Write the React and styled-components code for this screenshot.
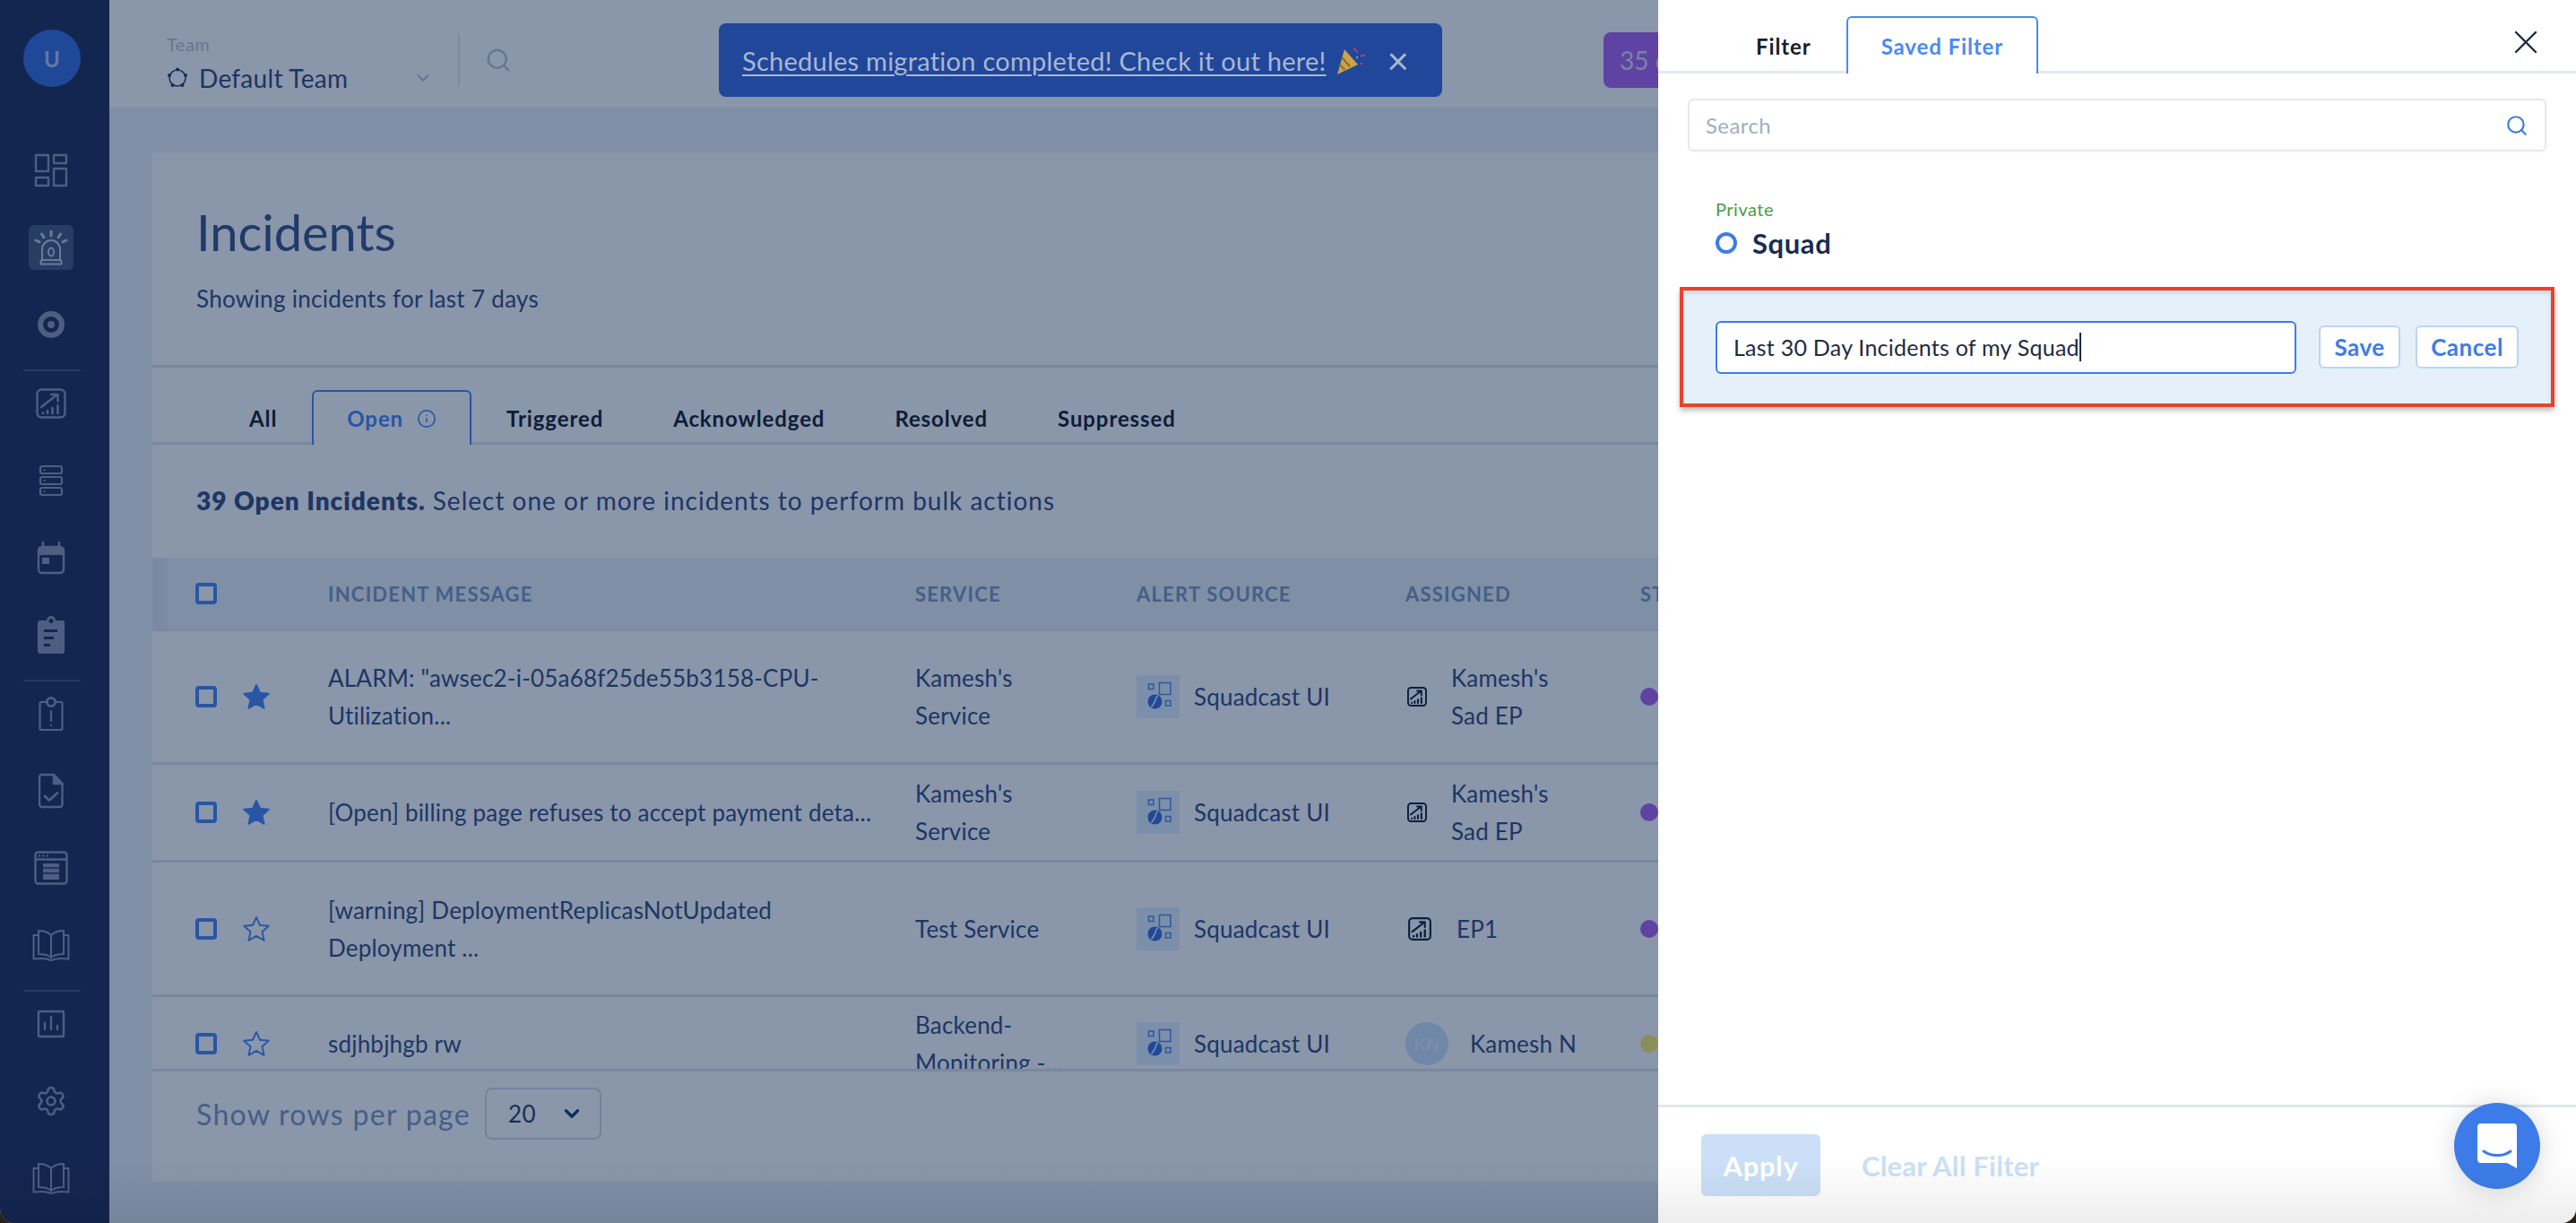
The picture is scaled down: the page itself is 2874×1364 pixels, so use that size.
import React from 'react';
import styled, { createGlobalStyle } from 'styled-components';
import { Settings, Search as SearchGlyph, ChevronDown, Info } from 'lucide-react';

const FONT = `"Lato", "Noto Sans", "Liberation Sans", sans-serif`;
const UI_BLUE = '#4a8af5';
const INK = '#384f7d';
const MUTED = '#8299be';
const RULE = '#dfe5eb';
const PURPLE = '#b067f2';

const Global = createGlobalStyle`
  html, body { margin: 0; padding: 0; background: #2a2018; }
  body { font-family: ${FONT}; }
  * { box-sizing: border-box; }
`;

const Screen = styled.div`
  position: relative;
  display: flex;
  width: 2874px;
  height: 1364px;
  overflow: hidden;
  border-radius: 0 0 16px 16px;
  background: #ebf2f8;
  color: ${INK};
`;

/* ---------- sidebar ---------- */
const Sidebar = styled.aside`
  flex: 0 0 122px;
  display: flex;
  flex-direction: column;
  align-items: center;
  padding-right: 8px;
  background: #233157;
  color: #8c9ab8;
`;
const Avatar = styled.div`
  width: 64px;
  height: 64px;
  margin: 33px 0 68px 2px;
  border-radius: 50%;
  background: #3b6fe0;
  color: #b9c9ee;
  font-size: 24px;
  font-weight: 700;
  display: flex;
  align-items: center;
  justify-content: center;
`;
const NavGroup = styled.div`
  display: flex;
  flex-direction: column;
  gap: 36px;
`;
const NavItem = styled.div`
  width: 50px;
  height: 50px;
  border-radius: 6px;
  display: flex;
  align-items: center;
  justify-content: center;
  background: ${p => (p.$active ? '#4b5b7e' : 'transparent')};
  color: ${p => (p.$active ? '#c3cde0' : 'inherit')};
`;
const NavRule = styled.div`
  width: 64px;
  height: 2px;
  margin: 25px 0 11px 2px;
  background: #46557b;
`;

const S = { fill: 'none', stroke: 'currentColor', strokeWidth: 2.4, strokeLinejoin: 'round', strokeLinecap: 'round' };

const DashIcon = () => (
  <svg width="38" height="38" viewBox="0 0 38 38" {...S}>
    <rect x="2" y="2" width="14" height="18" /><rect x="22" y="2" width="14" height="9" />
    <rect x="2" y="27" width="14" height="9" /><rect x="22" y="17" width="14" height="19" />
  </svg>
);
const SirenIcon = () => (
  <svg width="38" height="40" viewBox="0 0 38 40" {...S} strokeWidth="2">
    <path d="M9 34V22a10 10 0 0 1 20 0v12" />
    <path d="M7.5 38.5h23v-2.2a2.3 2.3 0 0 0-2.3-2.3H9.8a2.3 2.3 0 0 0-2.3 2.3z" />
    <ellipse cx="19" cy="25" rx="3" ry="4.6" />
    <path strokeWidth="3" d="M19 2v5M8.5 5l2.4 3.6M29.5 5l-2.4 3.6M2 12l4 1.8M36 12l-4 1.8" />
  </svg>
);
const TargetIcon = () => (
  <svg width="32" height="32" viewBox="0 0 32 32" fill="currentColor">
    <path fillRule="evenodd" d="M16 1a15 15 0 1 0 0 30 15 15 0 0 0 0-30zm0 6a9 9 0 1 1 0 18 9 9 0 0 1 0-18z" />
    <circle cx="16" cy="16" r="4" />
  </svg>
);
const EpIcon = ({ size = 34, width = 2.4 }) => (
  <svg width={size} height={size} viewBox="0 0 34 34" {...S} strokeWidth={width}>
    <rect x="1.5" y="1.5" width="31" height="31" rx="5" />
    <path d="M6 21L24 7M17 7h7.5v7.5" />
    <path strokeWidth={width * 1.1} d="M8 28v-.5M13 28v-3M18.5 28v-6M24.5 28v-9" />
  </svg>
);
const ServersIcon = () => (
  <svg width="28" height="36" viewBox="0 0 28 36" {...S} strokeWidth="2.2">
    <rect x="2" y="2" width="24" height="8" rx="2" /><rect x="2" y="14" width="24" height="8" rx="2" />
    <rect x="2" y="26" width="24" height="8" rx="2" />
    <path d="M6.5 6h.01M6.5 18h.01M6.5 30h.01" />
  </svg>
);
const CalendarIcon = () => (
  <svg width="32" height="38" viewBox="0 0 32 38" fill="none">
    <rect x="2" y="7" width="28" height="29" rx="4" stroke="currentColor" strokeWidth="2.4" />
    <path d="M2 11a4 4 0 0 1 4-4h20a4 4 0 0 1 4 4v5H2z" fill="currentColor" />
    <path d="M7 1v7M25 1v7" stroke="currentColor" strokeWidth="2.4" />
    <rect x="6" y="19" width="8" height="7" fill="currentColor" />
  </svg>
);
const ClipFilledIcon = () => (
  <svg width="30" height="42" viewBox="0 0 30 42" fill="none">
    <path fillRule="evenodd" fill="currentColor" d="M10 5a5 5 0 0 1 10 0h7a3 3 0 0 1 3 3v31a3 3 0 0 1-3 3H3a3 3 0 0 1-3-3V8a3 3 0 0 1 3-3zM15 3a2.5 2.5 0 1 0 0 5 2.5 2.5 0 0 0 0-5zM7 15v3h15v-3zM7 23v3h11v-3zM7 31v3h7v-3z" />
  </svg>
);
const ClipAlertIcon = () => (
  <svg width="28" height="40" viewBox="0 0 28 40" {...S} strokeWidth="2.2">
    <path d="M9 7H3a1.5 1.5 0 0 0-1.5 1.5v28A1.5 1.5 0 0 0 3 38h22a1.5 1.5 0 0 0 1.5-1.5v-28A1.5 1.5 0 0 0 25 7h-6" />
    <circle cx="14" cy="7" r="4.6" strokeWidth="2.8" />
    <path d="M14 17v11M14 33v.01" />
  </svg>
);
const DocCheckIcon = () => (
  <svg width="28" height="40" viewBox="0 0 28 40" {...S}>
    <path d="M4 2h13l9.5 10v23a3 3 0 0 1-3 3H4a3 3 0 0 1-3-3V5a3 3 0 0 1 3-3z" />
    <path d="M17 2v10h9.5z" fill="currentColor" />
    <path strokeWidth="3" d="M7 26l5 4.5 9-8" />
  </svg>
);
const WindowIcon = () => (
  <svg width="38" height="38" viewBox="0 0 38 38" fill="none">
    <rect x="1.5" y="1.5" width="35" height="35" rx="3" stroke="currentColor" strokeWidth="2.4" />
    <path d="M1.5 9.5h35" stroke="currentColor" strokeWidth="2.4" />
    <path d="M6 5.5h.01M10.5 5.5h.01M15 5.5h.01" stroke="currentColor" strokeWidth="2.4" strokeLinecap="round" />
    <rect x="10" y="14" width="18" height="18" fill="currentColor" />
    <path d="M10 19h18M10 25h18" stroke="#233157" strokeWidth="1.5" />
  </svg>
);
const BookIcon = () => (
  <svg width="42" height="36" viewBox="0 0 42 36" {...S} strokeWidth="2">
    <path d="M21 32V7c-3-3-8-5-14-5v26c6 0 11 1 14 4zM21 32V7c3-3 8-5 14-5v26c-6 0-11 1-14 4z" />
    <path d="M7 7H1.5v26.5c7-1 14-1 19.5 1.5 5.5-2.5 12.5-2.5 19.5-1.5V7H35" />
  </svg>
);
const BarsIcon = () => (
  <svg width="32" height="32" viewBox="0 0 32 32" {...S}>
    <rect x="2" y="2" width="28" height="28" rx="1" />
    <path d="M9 22v-7M16 22V8M23 22v-4" />
  </svg>
);

const navGroups = [
  { items: [<DashIcon />, <SirenIcon />, <TargetIcon />], active: 1 },
  { items: [<EpIcon />, <ServersIcon />, <CalendarIcon />, <ClipFilledIcon />] },
  { items: [<ClipAlertIcon />, <DocCheckIcon />, <WindowIcon />, <BookIcon />] },
  { items: [<BarsIcon />, <Settings size={36} strokeWidth={1.7} />, <BookIcon />] },
];

/* ---------- top bar ---------- */
const Column = styled.div`
  flex: 1;
  min-width: 0;
  display: flex;
  flex-direction: column;
`;
const TopBar = styled.header`
  flex: 0 0 120px;
  display: flex;
  align-items: center;
  padding: 14px 0 0 64px;
  background: #fff;
  white-space: nowrap;
`;
const TeamBlock = styled.div`
  flex: 0 0 325px;
  display: flex;
  flex-direction: column;
  gap: 9px;
  padding: 6px 28px 0 0;
`;
const TeamLabel = styled.span`
  font-size: 20px;
  line-height: 24px;
  letter-spacing: .5px;
  color: #bcc5d2;
`;
const TeamValue = styled.div`
  display: flex;
  align-items: center;
  gap: 12px;
  font-size: 28px;
  line-height: 34px;
  letter-spacing: .3px;
  color: #394c78;
  & > svg:last-child { margin-left: auto; color: #b7c2d1; }
`;
const VRule = styled.div`
  width: 2px;
  height: 58px;
  background: #e2e8ee;
`;
const TopSearch = styled.div`
  margin-left: 28px;
  width: 30px;
  display: flex;
  color: #b7c2d1;
`;
const Banner = styled.div`
  position: relative;
  z-index: 11;
  margin-left: 231px;
  flex: 0 0 807px;
  height: 82px;
  display: flex;
  align-items: center;
  padding-left: 26px;
  border-radius: 8px;
  background: #20479a;
  color: #a9b7d4;
  font-size: 29px;
  letter-spacing: .25px;
  & > a { color: inherit; text-decoration: underline; text-underline-offset: 4px; text-decoration-thickness: 1.5px; }
  & > svg:first-of-type { margin-left: 10px; }
`;
const BannerClose = styled.span`
  margin-left: 24px;
  font-size: 42px;
  line-height: 1;
`;
const TrialBadge = styled.div`
  margin-left: 180px;
  flex: 0 0 200px;
  height: 62px;
  display: flex;
  align-items: center;
  padding-left: 18px;
  border-radius: 8px;
  background: ${PURPLE};
  color: #e3dcf2;
  font-size: 28px;
`;

/* ---------- incidents card ---------- */
const Main = styled.main`
  flex: 1;
  padding: 50px 48px 46px;
  display: flex;
`;
const Card = styled.section`
  flex: 1;
  display: flex;
  flex-direction: column;
  background: #fff;
`;
const CardHead = styled.div`
  flex: 0 0 240px;
  padding: 51px 49px 0;
  border-bottom: 3px solid ${RULE};
`;
const Title = styled.h1`
  margin: 0;
  font-size: 56px;
  line-height: 76px;
  font-weight: 400;
  color: #3b558a;
`;
const Subtitle = styled.p`
  margin: 18px 0 0;
  font-size: 26px;
  line-height: 36px;
  letter-spacing: .3px;
  color: ${INK};
`;
const TabRow = styled.div`
  flex: 0 0 ${p => p.$h}px;
  display: flex;
  align-items: flex-end;
  padding-left: ${p => p.$pad}px;
  border-bottom: 3px solid ${p => p.$rule};
`;
const Tab = styled.div`
  height: ${p => p.$h}px;
  margin-bottom: -3px;
  padding: 0 37px;
  display: flex;
  align-items: center;
  gap: 15px;
  font-size: 24px;
  font-weight: 700;
  letter-spacing: .9px;
  color: ${p => (p.$active ? UI_BLUE : '#1a1f2b')};
  background: ${p => (p.$active ? '#fff' : 'transparent')};
  border: 2px solid ${p => (p.$active ? UI_BLUE : 'transparent')};
  border-bottom: 0;
  border-radius: 6px 6px 0 0;
`;
const InfoLine = styled.div`
  flex: 0 0 126px;
  padding: 44px 49px 0;
  font-size: 28px;
  line-height: 36px;
  letter-spacing: 1px;
  color: ${INK};
  white-space: nowrap;
  & > b { font-weight: 800; }
`;
const gridCols = '148px 655px 247px 300px 262px 1fr';
const THead = styled.div`
  flex: 0 0 82px;
  display: grid;
  grid-template-columns: ${gridCols};
  align-items: center;
  padding-left: 48px;
  background: linear-gradient(90deg, #e2e9f1 0, #e2e9f1 14px, #ebf2f8 18px);
  border-bottom: 2px solid ${RULE};
  font-size: 22px;
  font-weight: 700;
  letter-spacing: 1.2px;
  color: ${MUTED};
  white-space: nowrap;
`;
const TBody = styled.div`
  flex: 0 0 491px;
  overflow: hidden;
  border-bottom: 3px solid ${RULE};
`;
const Row = styled.div`
  height: ${p => p.$h}px;
  display: grid;
  grid-template-columns: ${gridCols};
  align-items: center;
  padding-left: 48px;
  border-bottom: 3px solid ${RULE};
  font-size: 26px;
  line-height: 42px;
  letter-spacing: .2px;
  white-space: nowrap;
`;
const CheckCell = styled.div`
  display: flex;
  align-items: center;
  gap: 29px;
`;
const Check = styled.span`
  width: 24px;
  height: 24px;
  border: 4px solid ${UI_BLUE};
  border-radius: 4px;
  background: #fff;
`;
const Lines = styled.div`
  & > span { display: block; }
`;
const Cell = styled.div`
  display: flex;
  align-items: center;
  gap: ${p => p.$gap}px;
  margin-left: ${p => p.$ml || 0}px;
`;
const SourceBox = styled.div`
  width: 48px;
  height: 48px;
  background: #e5f3ff;
`;
const Dot = styled.span`
  display: block;
  width: 20px;
  height: 20px;
  border-radius: 50%;
  background: ${p => p.$c};
`;
const UserChip = styled.div`
  width: 48px;
  height: 48px;
  border-radius: 50%;
  background: #cfe6fb;
  color: #eaf3fd;
  font-size: 20px;
  display: flex;
  align-items: center;
  justify-content: center;
`;
const EpInk = styled.span`
  display: flex;
  color: #1a2238;
`;
const CardFoot = styled.div`
  flex: 1;
  display: flex;
  align-items: center;
  gap: 16px;
  padding: 0 49px 29px;
  font-size: 32px;
  letter-spacing: 1.3px;
  color: ${MUTED};
  white-space: nowrap;
`;
const RowsSelect = styled.div`
  width: 130px;
  height: 58px;
  padding: 0 18px 0 24px;
  display: flex;
  align-items: center;
  justify-content: space-between;
  border: 2px solid #d5dde6;
  border-radius: 8px;
  font-size: 26px;
  letter-spacing: .5px;
  color: #2f3f5f;
  & > svg { color: #1f3a75; }
`;

/* ---------- drawer ---------- */
const Scrim = styled.div`
  position: absolute;
  inset: 0;
  z-index: 10;
  background: rgba(0, 27, 70, .46);
`;
const Drawer = styled.aside`
  position: absolute;
  top: 0;
  right: 0;
  bottom: 0;
  z-index: 20;
  width: 1024px;
  display: flex;
  flex-direction: column;
  background: #fff;
  color: #1f2f4f;
`;
const DrawerTabs = styled(TabRow)`
  padding-right: 43px;
  align-items: flex-start;
  & > div { margin-top: 18px; }
  & > svg { margin: 34px 0 0 auto; color: #1b2a44; }
`;
const DrawerSearch = styled.div`
  margin: 28px 33px 0;
  height: 59px;
  padding: 0 18px;
  display: flex;
  align-items: center;
  justify-content: space-between;
  border: 2px solid #e4e8ee;
  border-radius: 6px;
  font-size: 24px;
  letter-spacing: .4px;
  color: #a0aec0;
  & > svg { color: #3d7ce8; }
`;
const PrivateLabel = styled.div`
  margin: 52px 0 0 64px;
  font-size: 20px;
  line-height: 24px;
  letter-spacing: .5px;
  color: #4a9d3f;
`;
const SquadRow = styled.div`
  margin: 8px 0 0 64px;
  height: 36px;
  display: flex;
  align-items: center;
  gap: 17px;
  font-size: 31px;
  font-weight: 700;
  letter-spacing: .6px;
  color: #1a2c50;
`;
const Radio = styled.span`
  width: 24px;
  height: 24px;
  border: 4px solid #3d7ce8;
  border-radius: 50%;
`;
const EditBox = styled.div`
  margin: 31px 0 0 24px;
  width: 976px;
  height: 134px;
  padding-left: 36px;
  display: flex;
  align-items: center;
  background: #e6f0fb;
  border: 4px solid #e8432a;
  box-shadow: 0 4px 6px rgba(0, 0, 0, .25), inset 0 3px 4px rgba(0, 0, 0, .12);
`;
const NameInput = styled.div`
  width: 648px;
  height: 59px;
  padding-left: 18px;
  display: flex;
  align-items: center;
  background: #fff;
  border: 2px solid #3d7ce8;
  border-radius: 6px;
  font-size: 25px;
  letter-spacing: .25px;
  color: #1e2c3f;
  white-space: nowrap;
  &::after { content: ''; width: 2px; height: 32px; background: #1e2c3f; }
`;
const GhostButton = styled.div`
  width: ${p => p.$w}px;
  height: 48px;
  margin-left: ${p => p.$ml}px;
  display: flex;
  align-items: center;
  justify-content: center;
  background: #fff;
  border: 2px solid #bcd3f5;
  border-radius: 6px;
  color: #3d7ce8;
  font-size: 26px;
  font-weight: 700;
  letter-spacing: .5px;
`;
const DrawerFoot = styled.div`
  margin-top: auto;
  flex: 0 0 132px;
  padding: 30px 0 0 48px;
  display: flex;
  align-items: flex-start;
  border-top: 3px solid #e1e7ec;
`;
const ApplyButton = styled.div`
  width: 133px;
  height: 69px;
  display: flex;
  align-items: center;
  justify-content: center;
  border-radius: 6px;
  background: #cbdff8;
  color: #fff;
  font-size: 31px;
  font-weight: 700;
  letter-spacing: .6px;
`;
const ClearLink = styled.div`
  margin-left: 46px;
  height: 69px;
  display: flex;
  align-items: center;
  color: #cbdff8;
  font-size: 31px;
  font-weight: 700;
  letter-spacing: .2px;
  white-space: nowrap;
`;
const ChatBubble = styled.div`
  position: absolute;
  right: 40px;
  bottom: 38px;
  width: 96px;
  height: 96px;
  display: flex;
  align-items: center;
  justify-content: center;
  border-radius: 50%;
  background: #3d7ce8;
  box-shadow: 0 2px 30px rgba(0, 0, 0, .16);
`;
const WindowShade = styled.div`
  position: absolute;
  left: 0;
  right: 0;
  bottom: 0;
  z-index: 30;
  height: 70px;
  pointer-events: none;
  background: linear-gradient(180deg, rgba(0, 0, 0, 0), rgba(0, 0, 0, .07));
`;

/* ---------- small drawings ---------- */
const Star = ({ filled }) => (
  <svg width="30" height="30" viewBox="0 0 24 24" fill={filled ? UI_BLUE : 'none'} stroke={UI_BLUE} strokeWidth="1.5" strokeLinejoin="round">
    <polygon points="12,1.5 15.2,8.6 23,9.4 17.2,14.6 18.9,22.3 12,18.3 5.1,22.3 6.8,14.6 1,9.4 8.8,8.6" />
  </svg>
);
const SourceIcon = () => (
  <SourceBox>
    <svg width="48" height="48" viewBox="0 0 48 48" fill="none">
      <rect x="13.5" y="10" width="5.5" height="5.5" stroke="#5d8fe6" strokeWidth="1.6" />
      <rect x="25.5" y="8.5" width="12.5" height="13" stroke="#5d8fe6" strokeWidth="1.6" />
      <rect x="32.5" y="28.5" width="5.5" height="5.5" stroke="#5d8fe6" strokeWidth="1.6" />
      <circle cx="20.5" cy="29.5" r="8" fill="#3f6fe0" />
      <path d="M24 23c-3 1-2 4-3.5 6.5S18 34 16.5 35.5" stroke="#e5f3ff" strokeWidth="1.6" />
    </svg>
  </SourceBox>
);
const TeamDots = () => (
  <svg width="24" height="24" viewBox="0 0 24 24" fill="none" stroke="#2b3f6f" strokeWidth="1.5">
    <circle cx="12" cy="12" r="9" />
    <g fill="#2b3f6f" stroke="none">
      <circle cx="12" cy="2.5" r="2" /><circle cx="21" cy="9" r="2" /><circle cx="17.5" cy="20" r="2" />
      <circle cx="6.5" cy="20" r="2" /><circle cx="3" cy="9" r="2" />
    </g>
  </svg>
);
const Popper = () => (
  <svg width="34" height="34" viewBox="0 0 34 34">
    <path d="M10 5l15 17L2 33z" fill="#c9a24a" />
    <path d="M7 14l9 10M4.5 22l6 6" stroke="#8d6a2c" strokeWidth="2" />
    <path d="M20 4c3 0 2 4 5 4M28 13c2-2 3 0 5-2" stroke="#d8435b" strokeWidth="1.6" fill="none" />
    <circle cx="29" cy="21" r="1.2" fill="#d8435b" /><circle cx="24" cy="14" r="1.2" fill="#5fa4d8" />
  </svg>
);
const CloseX = () => (
  <svg width="26" height="26" viewBox="0 0 26 26" stroke="currentColor" strokeWidth="2.4" strokeLinecap="round">
    <path d="M2 2l22 22M24 2L2 24" />
  </svg>
);
const IntercomMark = () => (
  <svg width="44" height="50" viewBox="0 0 44 50">
    <path d="M4 0h36a4 4 0 0 1 4 4v46l-11-6H4a4 4 0 0 1-4-4V4a4 4 0 0 1 4-4z" fill="#fff" />
    <path d="M7 31c8 6 22 6 30 0" fill="none" stroke="#3d7ce8" strokeWidth="3" strokeLinecap="round" />
  </svg>
);

const rows = [
  { h: 149, star: true, msg: ['ALARM: "awsec2-i-05a68f25de55b3158-CPU-', 'Utilization...'], svc: ["Kamesh's", 'Service'], who: ["Kamesh's", 'Sad EP'], kind: 'small', dot: PURPLE },
  { h: 109, star: true, msg: ['[Open] billing page refuses to accept payment deta...'], svc: ["Kamesh's", 'Service'], who: ["Kamesh's", 'Sad EP'], kind: 'small', dot: PURPLE },
  { h: 150, star: false, msg: ['[warning] DeploymentReplicasNotUpdated', 'Deployment ...'], svc: ['Test Service'], who: ['EP1'], kind: 'large', dot: PURPLE },
  { h: 106, star: false, msg: ['sdjhbjhgb rw'], svc: ['Backend-', 'Monitoring -...'], who: ['Kamesh N'], kind: 'user', dot: '#fff06e' },
];

const TextLines = ({ lines }) => (
  <Lines>{lines.map(l => <span key={l}>{l}</span>)}</Lines>
);

const assignee = {
  small: { gap: 27, ml: 2, icon: <EpInk><EpIcon size={22} width={3} /></EpInk> },
  large: { gap: 28, ml: 3, icon: <EpInk><EpIcon size={26} width={2.8} /></EpInk> },
  user: { gap: 24, ml: 0, icon: <UserChip>KN</UserChip> },
};

export default function App() {
  return (
    <Screen>
      <Global />
      <Sidebar>
        <Avatar>U</Avatar>
        {navGroups.map((g, i) => (
          <React.Fragment key={i}>
            {i > 0 && <NavRule />}
            <NavGroup>
              {g.items.map((icon, j) => (
                <NavItem key={j} $active={g.active === j}>{icon}</NavItem>
              ))}
            </NavGroup>
          </React.Fragment>
        ))}
      </Sidebar>
      <Column>
        <TopBar>
          <TeamBlock>
            <TeamLabel>Team</TeamLabel>
            <TeamValue><TeamDots />Default Team<ChevronDown size={22} /></TeamValue>
          </TeamBlock>
          <VRule />
          <TopSearch><SearchGlyph size={30} strokeWidth={1.8} /></TopSearch>
          <Banner>
            <a>Schedules migration completed! Check it out here!</a>
            <Popper />
            <BannerClose>×</BannerClose>
          </Banner>
          <TrialBadge>35 days left</TrialBadge>
        </TopBar>
        <Main>
          <Card>
            <CardHead>
              <Title>Incidents</Title>
              <Subtitle>Showing incidents for last 7 days</Subtitle>
            </CardHead>
            <TabRow $h={86} $pad={69} $rule={RULE}>
              {['All', 'Open', 'Triggered', 'Acknowledged', 'Resolved', 'Suppressed'].map(t => (
                <Tab key={t} $h={61} $active={t === 'Open'}>
                  {t}{t === 'Open' && <Info size={22} strokeWidth={1.8} />}
                </Tab>
              ))}
            </TabRow>
            <InfoLine><b>39 Open Incidents.</b> Select one or more incidents to perform bulk actions</InfoLine>
            <THead>
              <CheckCell><Check /></CheckCell>
              <span>INCIDENT MESSAGE</span>
              <span>SERVICE</span>
              <span>ALERT SOURCE</span>
              <span>ASSIGNED</span>
              <span>STATUS</span>
            </THead>
            <TBody>
              {rows.map(r => {
                const a = assignee[r.kind];
                return (
                  <Row key={r.msg[0]} $h={r.h}>
                    <CheckCell><Check /><Star filled={r.star} /></CheckCell>
                    <TextLines lines={r.msg} />
                    <TextLines lines={r.svc} />
                    <Cell $gap={16}><SourceIcon />Squadcast UI</Cell>
                    <Cell $gap={a.gap} $ml={a.ml}>{a.icon}<TextLines lines={r.who} /></Cell>
                    <Dot $c={r.dot} />
                  </Row>
                );
              })}
            </TBody>
            <CardFoot>
              Show rows per page
              <RowsSelect>20<ChevronDown size={26} strokeWidth={3} /></RowsSelect>
            </CardFoot>
          </Card>
        </Main>
      </Column>
      <Scrim />
      <Drawer>
        <DrawerTabs $h={82} $pad={70} $rule="#e4e8ee">
          <Tab $h={64}>Filter</Tab>
          <Tab $h={64} $active>Saved Filter</Tab>
          <CloseX />
        </DrawerTabs>
        <DrawerSearch>Search<SearchGlyph size={26} strokeWidth={2} /></DrawerSearch>
        <PrivateLabel>Private</PrivateLabel>
        <SquadRow><Radio />Squad</SquadRow>
        <EditBox>
          <NameInput>Last 30 Day Incidents of my Squad</NameInput>
          <GhostButton $w={91} $ml={25}>Save</GhostButton>
          <GhostButton $w={115} $ml={17}>Cancel</GhostButton>
        </EditBox>
        <DrawerFoot>
          <ApplyButton>Apply</ApplyButton>
          <ClearLink>Clear All Filter</ClearLink>
        </DrawerFoot>
        <ChatBubble><IntercomMark /></ChatBubble>
      </Drawer>
      <WindowShade />
    </Screen>
  );
}
